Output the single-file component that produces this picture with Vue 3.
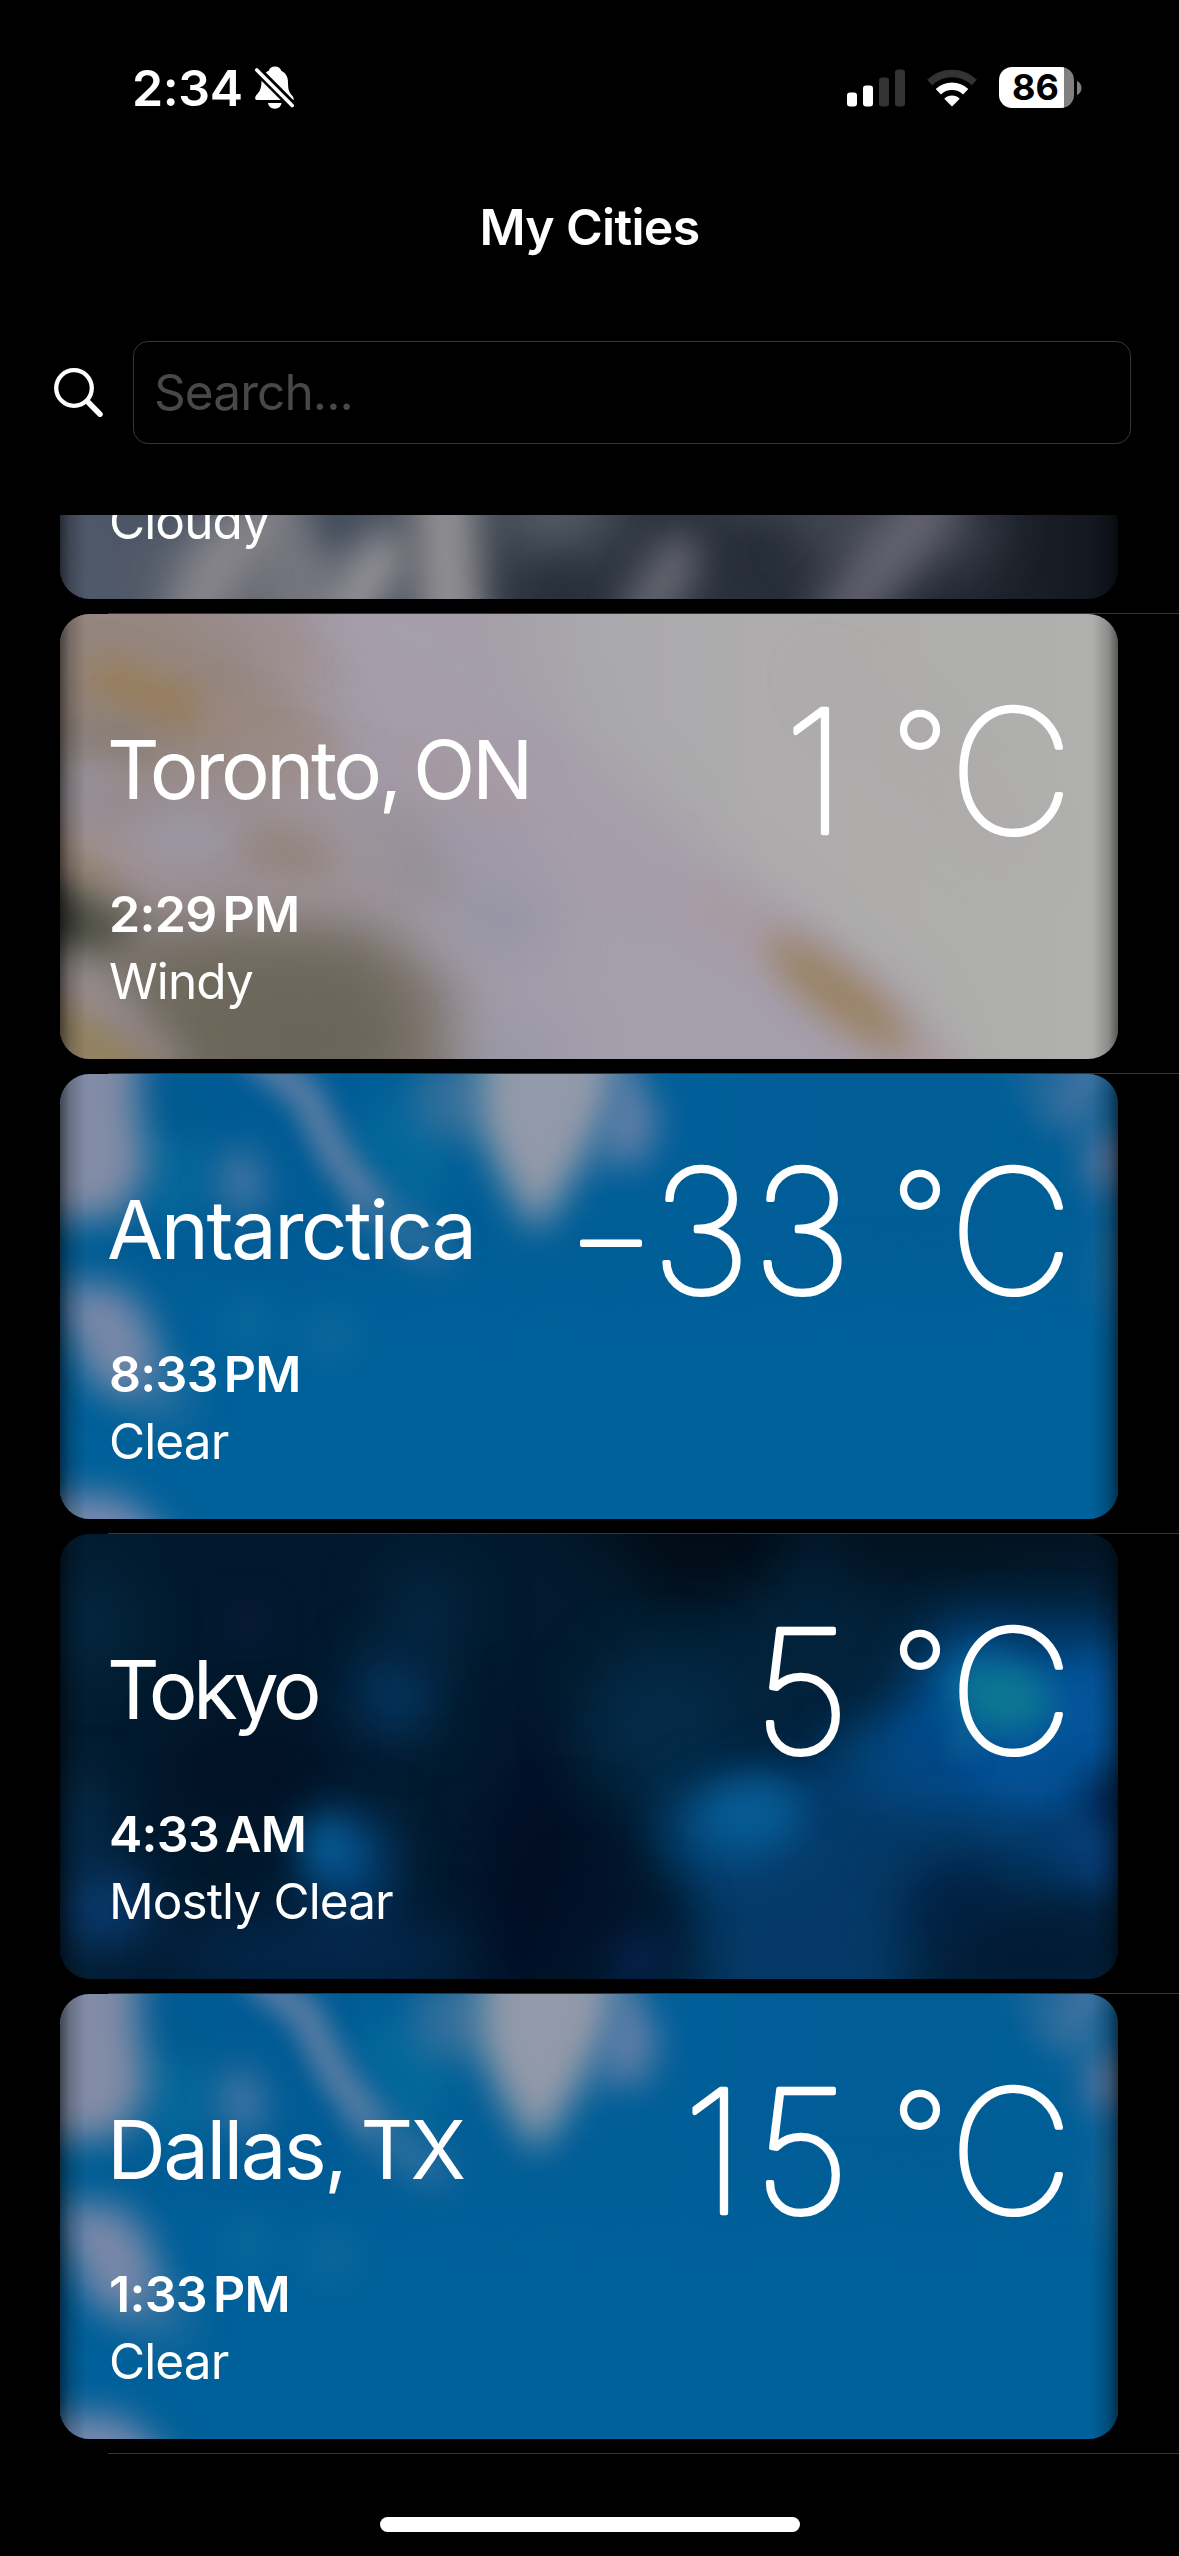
<template>
	<div class="screen">
		<!-- Status bar -->
		<header class="status-bar">
			<div class="status-left">
				<span class="status-time">2:34</span>
				<svg class="bell-icon" viewBox="0 0 40 44">
					<path fill="#fff" d="M20 0.5c3.4 0 5.6 2 6.2 4.2C31 7 33 11 33 16c0 7.500 1 10 4 13.500 1.600 2 2 3 1.500 4.500H1.800C-.3 34-.2 31 1 29.500 5 25.500 6.200 22.500 6.500 16 6.700 10.500 9 6.800 13.800 4.700 14.400 2.500 16.600.5 20 .5z"/>
					<path fill="#fff" d="M13 37h13.500c-.5 3.500-3 5.700-6.700 5.700S13.500 40.500 13 37z"/>
					<path stroke="#000" stroke-width="9" d="M-1 1l42 42"/>
					<path stroke="#fff" stroke-width="3.600" stroke-linecap="round" d="M1.800 4l35.400 35.400"/>
				</svg>
			</div>
			<div class="status-right">
				<svg class="signal-icon" viewBox="0 0 58 38">
					<rect x="0" y="23.500" width="10" height="14" rx="3" fill="#fff"/>
					<rect x="16" y="16.500" width="10" height="21" rx="3" fill="#fff"/>
					<rect x="32" y="8.500" width="10" height="29" rx="3" fill="#333"/>
					<rect x="48" y="0.500" width="10" height="37" rx="3" fill="#333"/>
				</svg>
				<svg class="wifi-icon" viewBox="0 0 50 38">
					<path fill="none" stroke="#333" stroke-width="7.500" d="M2.600 13.500a32.500 32.500 0 0 1 44.800 0"/>
					<path fill="none" stroke="#fff" stroke-width="7.500" d="M11.300 22.800a19.800 19.800 0 0 1 27.400 0"/>
					<path fill="#fff" d="M25 37.500l-7.700-7.800a11 11 0 0 1 15.400 0z"/>
				</svg>
				<div class="battery">
					<div class="battery-body">
						<span class="battery-level">86</span>
					</div>
					<svg class="battery-cap" viewBox="0 0 5 14">
						<path fill="#808080" d="M0 0c3 1.500 4.500 4 4.500 7S3 12.500 0 14z"/>
					</svg>
				</div>
			</div>
		</header>

		<h1 class="title">My Cities</h1>

		<!-- Search -->
		<div class="search-row">
			<svg class="search-icon" viewBox="0 0 50 50" fill="none" stroke="#fff" stroke-linecap="round">
				<circle cx="20" cy="20" r="17.800" stroke-width="4.300"/>
				<path stroke-width="5.500" d="M33.500 33.500l12.500 12.700"/>
			</svg>
			<input class="search-input" type="text" placeholder="Search..." v-model="query">
		</div>

		<!-- City list -->
		<main class="list-viewport">
			<div class="list">
				<div v-for="(city, i) in cities" :key="i" class="list-row">
					<article class="card">
						<svg class="sky" viewBox="0 0 1058 445" preserveAspectRatio="none">
							<defs>
								<linearGradient :id="'base' + i">
									<stop v-for="(c, n) in scenes[city.scene].base" :key="n" :offset="n / (scenes[city.scene].base.length - 1)" :stop-color="c"/>
								</linearGradient>
								<filter v-for="b in blurs" :id="'soft' + i + '-' + b" :key="b" filterUnits="userSpaceOnUse" x="-150" y="-150" width="1358" height="745" color-interpolation-filters="sRGB">
									<feGaussianBlur :stdDeviation="b"/>
								</filter>
							</defs>
							<rect width="1058" height="445" :fill="`url(#base${i})`"/>
							<g v-for="(s, n) in scenes[city.scene].shapes" :key="n" :filter="`url(#soft${i}-${s.b || 18})`" :opacity="s.o || 1">
								<path v-if="s.d" :d="s.d" :fill="s.w ? 'none' : s.c" :stroke="s.w ? s.c : 'none'" :stroke-width="s.w" stroke-linecap="round" stroke-linejoin="round"/>
								<ellipse v-else :cx="s.e[0]" :cy="s.e[1]" :rx="s.e[2]" :ry="s.e[3]" :transform="`rotate(${s.e[4] || 0} ${s.e[0]} ${s.e[1]})`" :fill="s.c"/>
							</g>
						</svg>
						<div class="card-content">
							<div v-if="city.name" class="card-main">
								<span class="city-name" :style="{ letterSpacing: city.track + 'px' }">{{ city.name }}</span>
								<svg class="temp" viewBox="0 0 540 215">
									<text y="171"><tspan v-for="g in glyphs(city.temp)" :key="g.x" :x="g.x" :y="g.y" :class="g.cls">{{ g.ch }}</tspan></text>
								</svg>
							</div>
							<div v-if="city.time" class="city-time">{{ city.time }}<span class="meridiem">{{ city.meridiem }}</span></div>
							<div class="city-condition">{{ city.condition }}</div>
						</div>
					</article>
				</div>
			</div>
		</main>

		<div class="home-indicator"></div>
	</div>
</template>

<script setup>
import { ref } from 'vue'

const query = ref('')

const cities = [
	{ condition: 'Cloudy', scene: 'cloudy' },
	{ name: 'Toronto, ON', temp: '1', time: '2:29', meridiem: 'PM', condition: 'Windy', scene: 'windy', track: -3.5 },
	{ name: 'Antarctica', temp: '–33', time: '8:33', meridiem: 'PM', condition: 'Clear', scene: 'clear', track: -2.5 },
	{ name: 'Tokyo', temp: '5', time: '4:33', meridiem: 'AM', condition: 'Mostly Clear', scene: 'night', track: -4.6 },
	{ name: 'Dallas, TX', temp: '15', time: '1:33', meridiem: 'PM', condition: 'Clear', scene: 'clear', track: -2.6 }
]

// Digits sit in 101px slots counted from the right, the unit is fixed
function glyphs(temp) {
	const list = [...temp].map((ch, i) => {
		if (ch === '–') return { ch, x: 84, y: 157, cls: 'minus' }
		const slot = temp.length - 1 - i
		return { ch, x: 275 - slot * 101 + (ch === '1' ? 13 : 0), y: 170.5, cls: 'digit' }
	})
	list.push({ ch: '°', x: 393, y: 138.5, cls: 'degree' })
	list.push({ ch: 'C', x: 484, y: 170.5, cls: 'unit' })
	return list
}

const blurs = [12, 18, 28]

// Blurred card backgrounds: e = ellipse, d = path, w = stroke width, b = blur
const scenes = {
	cloudy: {
		base: ['#4e5869', '#555c69', '#545b68', '#343c47', '#2c333d', '#30363f', '#20262f', '#11141d'],
		shapes: [
			{ e: [120, 365, 80, 25], c: '#4a5565' },
			{ e: [195, 415, 90, 60], c: '#75757c', o: 0.7, b: 28 },
			{ d: 'M215 360L165 400L125 470', w: 50, c: '#918e92', o: 0.8 },
			{ d: 'M240 380L240 470', w: 60, c: '#7b7b83', o: 0.7 },
			{ e: [285, 365, 35, 30], c: '#424c5a' },
			{ d: 'M325 400L285 460', w: 42, c: '#98969a' },
			{ d: 'M385 330L390 480', w: 62, c: '#939093' },
			{ e: [495, 355, 60, 40], c: '#626873', o: 0.8, b: 28 },
			{ e: [500, 440, 40, 30], c: '#262d37', o: 0.8 },
			{ d: 'M618 405L585 460', w: 48, c: '#6c6c77', o: 0.9 },
			{ e: [705, 410, 45, 55], c: '#262d37', o: 0.8 },
			{ e: [840, 375, 100, 45], c: '#4d505c', o: 0.8, b: 28 },
			{ d: 'M870 350L830 400L780 470', w: 55, c: '#6c6b77', o: 0.8 },
			{ e: [740, 345, 90, 20], c: '#444a56', o: 0.8 }
		]
	},
	windy: {
		base: ['#94898a', '#9b9095', '#a29aa5', '#a9a8ac', '#aeacac', '#aeaeac', '#b0b0ae'],
		shapes: [
			{ d: 'M300 -60L350 -60L540 150L860 400L900 520L380 520L180 180Z', c: '#a59eab', b: 28 },
			{ d: 'M-30 -30L110 -30L280 120L180 200L-30 160Z', c: '#95857a', o: 0.8, b: 28 },
			{ d: 'M205 12L270 62', w: 26, c: '#9d8c86', o: 0.8 },
			{ d: 'M45 62L85 80L130 96', w: 38, c: '#9a7b50', o: 0.8 },
			{ e: [40, 130, 60, 28], c: '#857c74', o: 0.7 },
			{ d: 'M160 105L260 140', w: 40, c: '#9d8b84', o: 0.8 },
			{ e: [25, 170, 40, 28], c: '#9b95a2', o: 0.8 },
			{ e: [95, 195, 100, 16, 5], c: '#8f898f', o: 0.6 },
			{ e: [240, 230, 190, 70, 10], c: '#9c9196', o: 0.8, b: 28 },
			{ e: [125, 226, 50, 18, 5], c: '#9b9aaa' },
			{ e: [225, 155, 40, 22], c: '#9b8a83', o: 0.6 },
			{ e: [228, 240, 46, 28, 15], c: '#908176', o: 0.8 },
			{ e: [362, 255, 36, 28], c: '#918e98', o: 0.6 },
			{ e: [330, 205, 50, 20, 15], c: '#95919b', o: 0.6 },
			{ d: 'M-10 212L60 235L120 285L250 290', w: 26, c: '#a4969c', o: 0.8 },
			{ d: 'M-20 228L45 275', w: 24, c: '#97815a', o: 0.8 },
			{ d: 'M-60 265L20 280L80 305L80 345L-60 345Z', c: '#484c3f' },
			{ d: 'M-40 260L8 280L8 330L-40 330Z', c: '#1b1e17', o: 0.7 },
			{ d: 'M40 325L150 305L310 310L390 360L430 520L100 520Z', c: '#7e756e', b: 28 },
			{ d: 'M60 345L150 330L310 330L340 400L310 520L140 520Z', c: '#6b6759', o: 0.85, b: 28 },
			{ e: [250, 425, 80, 50], c: '#686559', o: 0.8, b: 28 },
			{ d: 'M-10 345L20 365L110 450', w: 26, c: '#9c9297', o: 0.8 },
			{ d: 'M-20 400L70 460', w: 38, c: '#94804f', o: 0.9 },
			{ e: [440, 305, 50, 36, 25], c: '#9393a4', b: 28 },
			{ e: [430, 235, 60, 28, 25], c: '#9e9aab', o: 0.8 },
			{ e: [455, 440, 60, 40], c: '#9797a8', o: 0.8, b: 28 },
			{ e: [400, 165, 75, 18, 25], c: '#a5959a', o: 0.7 },
			{ e: [520, 215, 110, 14, 32], c: '#ad9aa3', o: 0.5, b: 28 },
			{ e: [385, 115, 110, 12, 35], c: '#ad9ea8', o: 0.5 },
			{ d: 'M650 290L735 335L890 470', w: 44, c: '#a99aa0', o: 0.85 },
			{ e: [778, 380, 88, 24, 38], c: '#967c56', o: 0.85 },
			{ e: [860, 150, 150, 18, 42], c: '#b0a5a8', o: 0.6, b: 28 }
		]
	},
	clear: {
		base: ['#005e95', '#005b95', '#005e97', '#005e98', '#005d96', '#005f98'],
		shapes: [
			{ d: 'M-30 220L1100 210L1100 520L-30 520Z', c: '#006099', b: 28 },
			{ e: [115, 95, 34, 60], c: '#07699b', o: 0.9 },
			{ e: [120, 35, 26, 30], c: '#00588f' },
			{ d: 'M-60 -60L78 -60L78 40L88 90L62 142L-60 148Z', c: '#828ca6' },
			{ e: [345, 75, 45, 60, -25], c: '#056a9b', o: 0.8 },
			{ e: [182, 108, 22, 34, -8], c: '#4678a3' },
			{ d: 'M195 -20L245 20L275 80L308 125', w: 34, c: '#6481a6', b: 12, o: 0.85 },
			{ d: 'M315 135L350 160L375 175', w: 34, c: '#3d75a0', o: 0.85 },
			{ e: [390, 25, 36, 42], c: '#3d739d', o: 0.85 },
			{ d: 'M418 -60L562 -60L556 30L510 110L476 160L440 100L418 50Z', c: '#929aa9' },
			{ d: 'M560 -30L598 45L584 88L540 90Z', c: '#6781a8' },
			{ d: 'M1040 -30L1010 30', w: 55, c: '#4d78a2', o: 0.85 },
			{ d: 'M965 -30L985 20', w: 35, c: '#2c6c9c', o: 0.7 },
			{ e: [1052, 88, 26, 34], c: '#6c7b9e', o: 0.9 },
			{ e: [1058, 185, 20, 60], c: '#23699a', o: 0.8 },
			{ e: [85, 310, 55, 34, 35], c: '#2b709f', o: 0.8 },
			{ d: 'M-10 210L60 212L92 250L95 310L45 318L15 275Z', c: '#7988a8' },
			{ d: 'M-60 422L60 422L115 470L115 520L-60 520Z', c: '#7d8bad' },
			{ e: [188, 250, 28, 22], c: '#0d6a9c', o: 0.8 },
			{ e: [270, 262, 28, 24], c: '#116b9d', o: 0.8 }
		]
	},
	night: {
		base: ['#031c30', '#02182c', '#02192e', '#021a2d', '#03233c', '#03223a', '#032440'],
		shapes: [
			{ d: 'M480 -80L800 -80L700 60L600 70Z', c: '#010c17', b: 28 },
			{ d: 'M700 -60L1100 -60L1100 35L800 60Z', c: '#021321', b: 28 },
			{ e: [30, 90, 50, 50], c: '#03263f', b: 28 },
			{ e: [187, 88, 18, 18], c: '#0c1c44' },
			{ d: 'M120 200L260 190L240 270L110 280Z', c: '#021024', b: 28 },
			{ e: [335, 160, 40, 42], c: '#063c6a', b: 28 },
			{ e: [365, 80, 45, 50], c: '#042642', b: 28 },
			{ d: 'M475 150L530 330L500 460L420 450L420 320Z', c: '#020f26', b: 28 },
			{ e: [600, 190, 80, 75], c: '#032a47', b: 28 },
			{ d: 'M620 300L760 220L1100 240L1100 340L870 380L830 500L650 500Z', c: '#053a68', b: 28 },
			{ d: 'M790 240L850 160L890 90L1120 110L1120 230L1060 260L940 275Z', c: '#04549a', b: 28 },
			{ d: 'M780 235L820 210L860 250', w: 34, c: '#04487f', o: 0.8, b: 28 },
			{ e: [875, 220, 25, 30], c: '#04417f', o: 0.7 },
			{ e: [940, 160, 52, 34, 18], c: '#0a6f98', b: 18 },
			{ e: [945, 165, 36, 22], c: '#117e8d', o: 0.8 },
			{ e: [905, 208, 16, 18], c: '#176995', b: 12, o: 0.6 },
			{ e: [975, 105, 50, 8], c: '#022443', o: 0.6 },
			{ e: [975, 245, 50, 16, 15], c: '#05529a', o: 0.8 },
			{ e: [670, 290, 75, 42, -8], c: '#065590', o: 0.8, b: 28 },
			{ e: [690, 278, 48, 32, -8], c: '#07609a', o: 0.8 },
			{ e: [1052, 268, 26, 32], c: '#032452' },
			{ e: [1030, 322, 38, 22, 35], c: '#0c4080', o: 0.8 },
			{ e: [560, 390, 55, 40], c: '#021730', b: 28 },
			{ e: [900, 370, 60, 45], c: '#022042', b: 28 },
			{ e: [980, 425, 90, 45], c: '#021a34', b: 28 },
			{ e: [290, 335, 40, 55, 10], c: '#064a84', b: 28 },
			{ e: [268, 312, 24, 30], c: '#0767a6', o: 0.85 },
			{ e: [20, 290, 24, 40], c: '#06355c', b: 28 },
			{ e: [45, 375, 45, 36], c: '#0b4480', b: 28 },
			{ e: [260, 420, 160, 30], c: '#042a53', b: 28 },
			{ e: [580, 425, 28, 28], c: '#08234e' },
			{ e: [510, 350, 60, 70], c: '#020f25', o: 0.7, b: 28 }
		]
	}
}
</script>

<style>
html,
body {
	margin: 0;
	background: #000;
}
</style>

<style scoped>
.screen {
	width: 1179px;
	height: 2556px;
	box-sizing: border-box;
	display: flex;
	flex-direction: column;
	overflow: hidden;
	background: #000;
	color: #fff;
	font-family: Inter, 'Liberation Sans', sans-serif;
	font-size: 49.5px;
}

/* Status bar */
.status-bar {
	height: 176px;
	flex: none;
	display: flex;
	align-items: center;
	justify-content: space-between;
	padding: 0 97px 0 132px;
	box-sizing: border-box;
}

.status-left,
.status-right {
	display: flex;
	align-items: center;
}

.status-time {
	font-size: 50px;
	font-weight: 600;
	letter-spacing: -0.4px;
	width: 123px;
	white-space: nowrap;
}

.bell-icon {
	width: 40px;
	height: 44px;
}

.signal-icon {
	width: 58px;
	height: 38px;
	margin-top: -1px;
}

.wifi-icon {
	width: 50px;
	height: 38px;
	margin: -1px 22px 0;
}

.battery {
	display: flex;
	align-items: center;
	gap: 3px;
	margin-top: -1px;
}

.battery-body {
	width: 75px;
	height: 41px;
	border-radius: 13px;
	background: linear-gradient(90deg, #fff 65px, #808080 65px);
}

.battery-level {
	display: block;
	width: 75px;
	padding-right: 2px;
	box-sizing: border-box;
	line-height: 41px;
	text-align: center;
	color: #000;
	font-size: 36px;
	font-weight: 700;
}

.battery-cap {
	width: 5px;
	height: 14px;
}

.title {
	height: 102px;
	flex: none;
	margin: 0;
	line-height: 102px;
	text-align: center;
	font-size: 50px;
	font-weight: 600;
	letter-spacing: -0.7px;
}

/* Search */
.search-row {
	flex: none;
	display: flex;
	align-items: center;
	height: 103px;
	margin-top: 63px;
	padding: 0 48px 0 54px;
}

.search-icon {
	width: 50px;
	height: 50px;
	margin-right: 29px;
}

.search-input {
	flex: 1;
	height: 103px;
	box-sizing: border-box;
	padding: 0 20px 2px;
	border: 1px solid #38383a;
	border-radius: 15px;
	outline: none;
	background: #000;
	color: #fff;
	font: inherit;
	letter-spacing: -0.9px;
}

.search-input::placeholder {
	color: #48484a;
	opacity: 1;
}

/* List */
.list-viewport {
	flex: none;
	height: 1940px;
	margin-top: 71px;
	overflow: hidden;
}

.list {
	margin-top: -361px;
}

.list-row {
	display: flex;
	flex-direction: column;
	height: 460px;
}

.list-row::after {
	content: '';
	height: 1px;
	margin: 14px 0 0 108px;
	background: #363638;
}

.card {
	position: relative;
	width: 1058px;
	height: 445px;
	margin-left: 60px;
	border-radius: 30px;
	overflow: hidden;
}

.sky {
	position: absolute;
	inset: 0;
	width: 100%;
	height: 100%;
}

/* Side vignette */
.card::after {
	content: '';
	position: absolute;
	inset: 0;
	background: linear-gradient(90deg, rgba(0, 0, 0, 0.5), rgba(0, 0, 0, 0.2) 10px, transparent 26px, transparent 1032px, rgba(0, 0, 0, 0.2) 1048px, rgba(0, 0, 0, 0.5));
}

.card-content {
	position: relative;
	z-index: 1;
	height: 100%;
	box-sizing: border-box;
	display: flex;
	flex-direction: column;
	justify-content: flex-end;
	padding: 0 51px 44px 49px;
}

.card-main {
	display: flex;
	align-items: center;
	height: 215px;
	margin-bottom: 4px;
	white-space: nowrap;
}

.city-name {
	width: 418px;
	margin-left: -2px;
	font-size: 81.5px;
	font-weight: 400;
	word-spacing: -5px;
}

.temp {
	width: 540px;
	height: 215px;
	flex: none;
	margin-left: auto;
	overflow: visible;
	fill: #fff;
	stroke: #fff;
	stroke-width: 4.400px;
	stroke-linejoin: round;
	text-anchor: middle;
	font-size: 171px;
	font-weight: 100;
}

.degree {
	font-size: 121px;
	stroke-width: 4.400px;
}

.minus {
	font-size: 114px;
	stroke-width: 5px;
}

.city-time,
.city-condition {
	line-height: 67px;
	white-space: nowrap;
}

.city-time {
	font-size: 50px;
	font-weight: 600;
	letter-spacing: -0.7px;
}

.meridiem {
	margin-left: 6px;
}

.city-condition {
	letter-spacing: -0.9px;
}

.home-indicator {
	flex: none;
	width: 420px;
	height: 15px;
	margin: 62px auto 0;
	border-radius: 8px;
	background: #fff;
}
</style>
